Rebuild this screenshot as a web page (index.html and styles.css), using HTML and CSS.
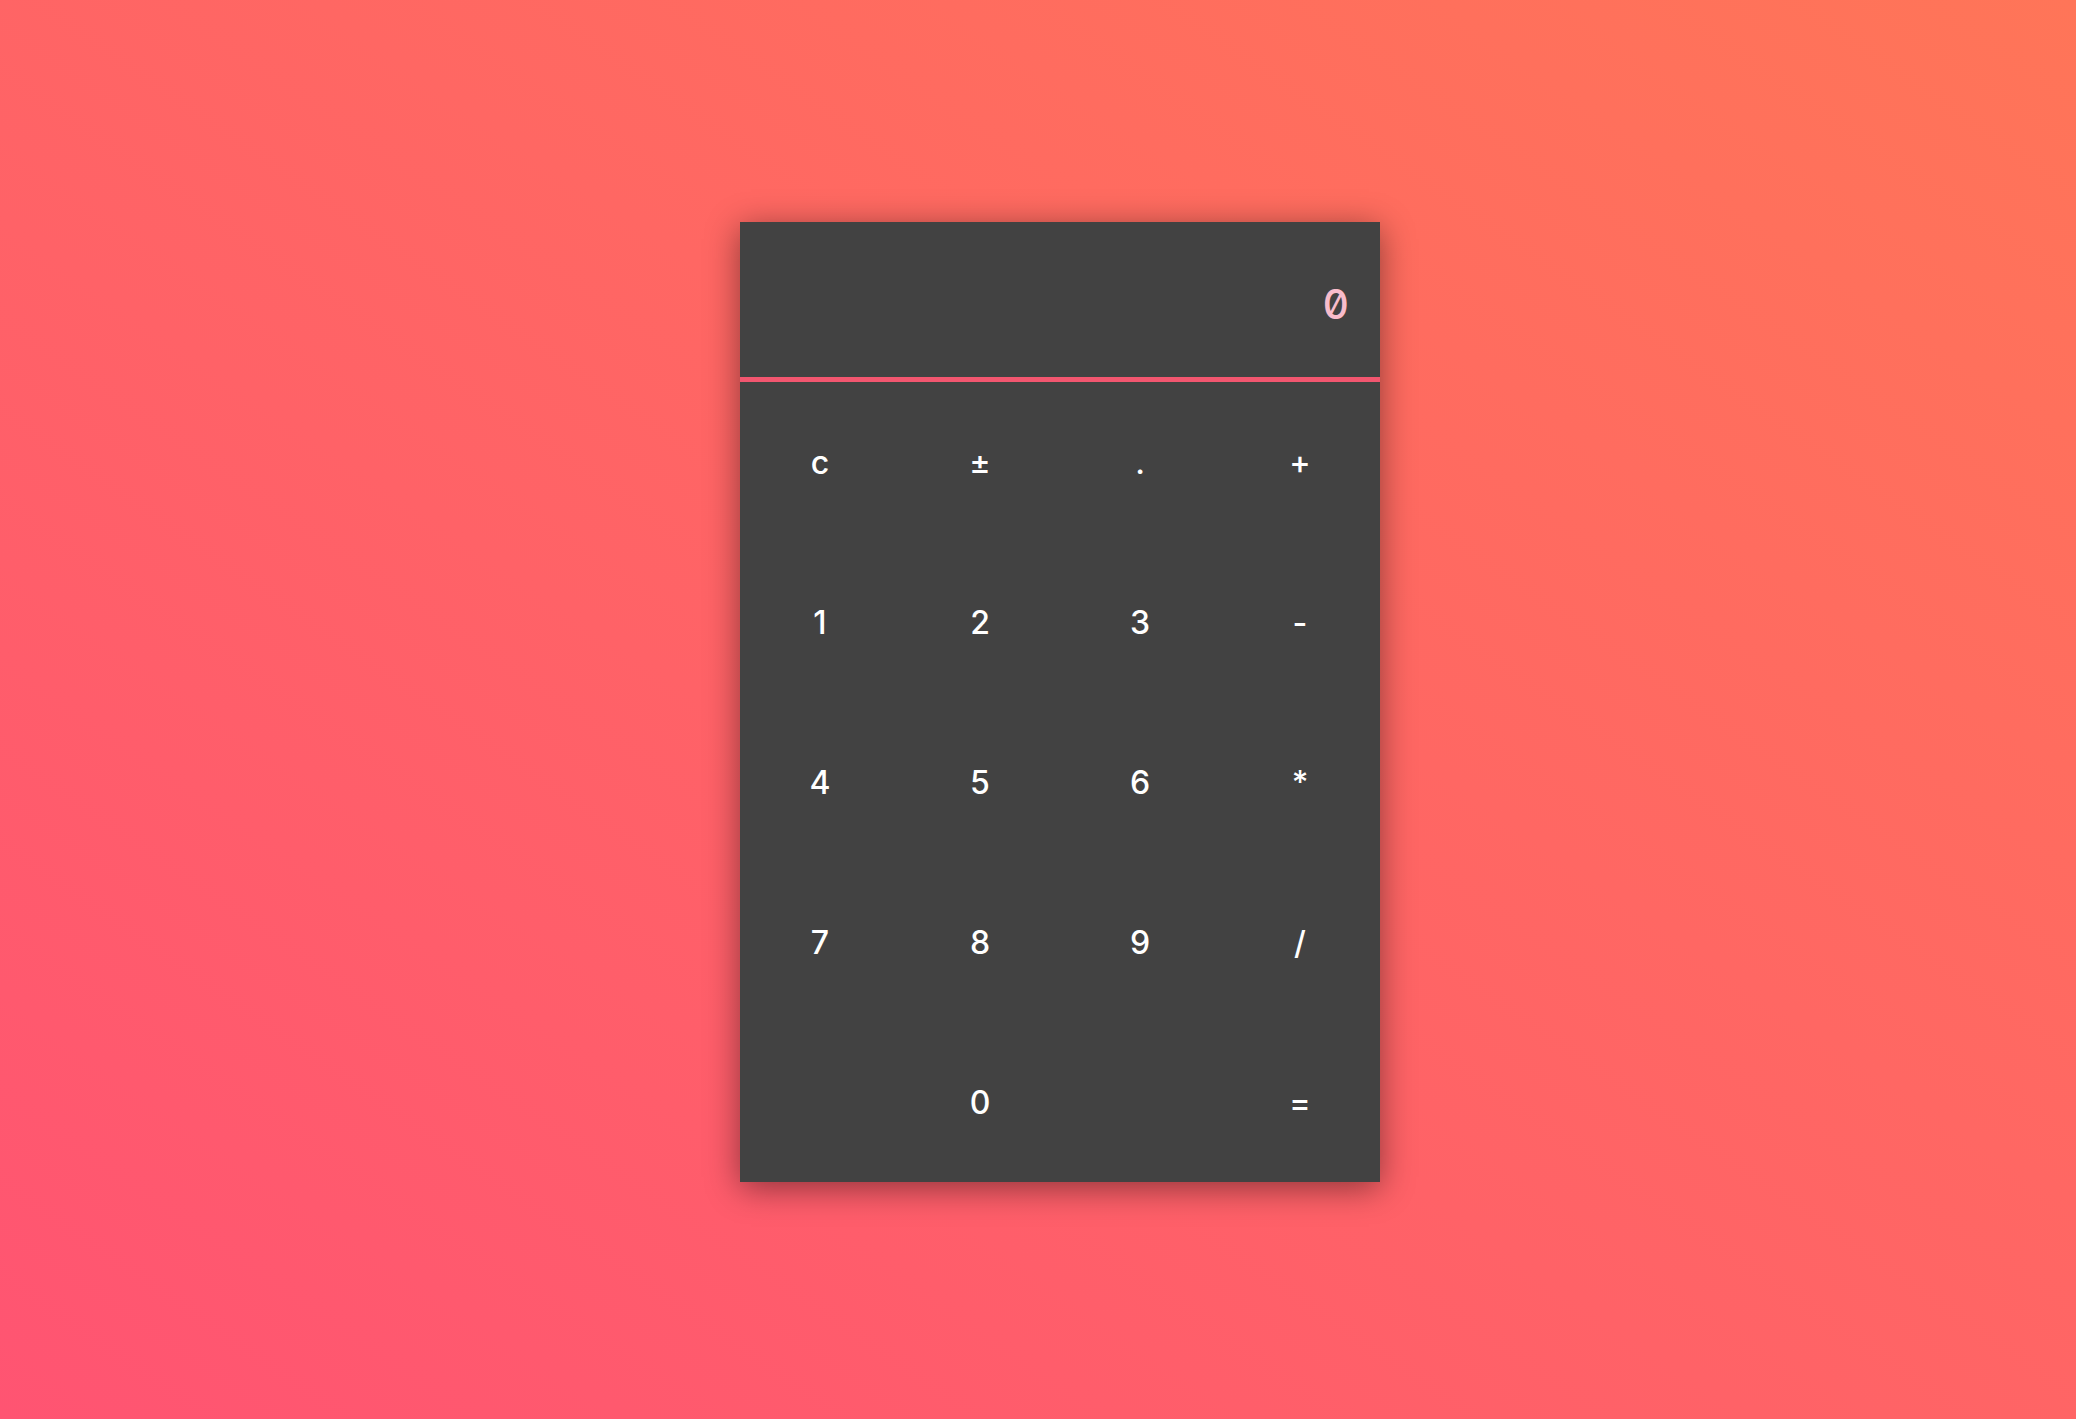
FILE: index.html
```html
<!DOCTYPE html>
<html>
<head>
<meta charset="utf-8">
<title>Calculator</title>
<link rel="stylesheet" href="styles.css">
</head>
<body>
<div class="calc">
  <div class="display">0</div>
  <div class="keys">
    <button class="key">c</button>
    <button class="key">±</button>
    <button class="key">.</button>
    <button class="key">+</button>
    <button class="key">1</button>
    <button class="key">2</button>
    <button class="key">3</button>
    <button class="key">-</button>
    <button class="key">4</button>
    <button class="key">5</button>
    <button class="key">6</button>
    <button class="key">*</button>
    <button class="key">7</button>
    <button class="key">8</button>
    <button class="key">9</button>
    <button class="key">/</button>
    <button class="key zero">0</button>
    <button class="key">=</button>
  </div>
</div>
</body>
</html>
```

FILE: styles.css
```css
html, body {
  margin: 0;
  padding: 0;
  height: 100%;
}
body {
  background: linear-gradient(to top right, #ff5472, #ff7558);
  font-family: Inter, "Noto Sans", sans-serif;
  overflow: hidden;
}
.calc {
  margin: 222px 0 0 740px;
  width: 640px;
  background: #424242;
  box-shadow: 0 6px 32px rgba(0, 0, 0, 0.45);
}
.display {
  height: 147px;
  padding-top: 8px;
  border-bottom: 5px solid #f2566f;
  display: flex;
  align-items: center;
  justify-content: flex-end;
  padding-right: 31px;
  font-family: Inter, "DejaVu Sans Mono", monospace;
  font-feature-settings: "zero" 1, "tnum" 1;
  font-weight: 500;
  font-size: 41px;
  color: #f8bccb;
}
.keys {
  display: grid;
  grid-template-columns: repeat(4, 160px);
  grid-auto-rows: 160px;
}
.key {
  background: transparent;
  border: none;
  color: #ffffff;
  font-family: Inter, "Noto Sans", sans-serif;
  font-weight: 500;
  font-size: 32px;
  padding: 0;
  margin: 0;
}
.zero {
  grid-column: 1 / span 3;
}
```
